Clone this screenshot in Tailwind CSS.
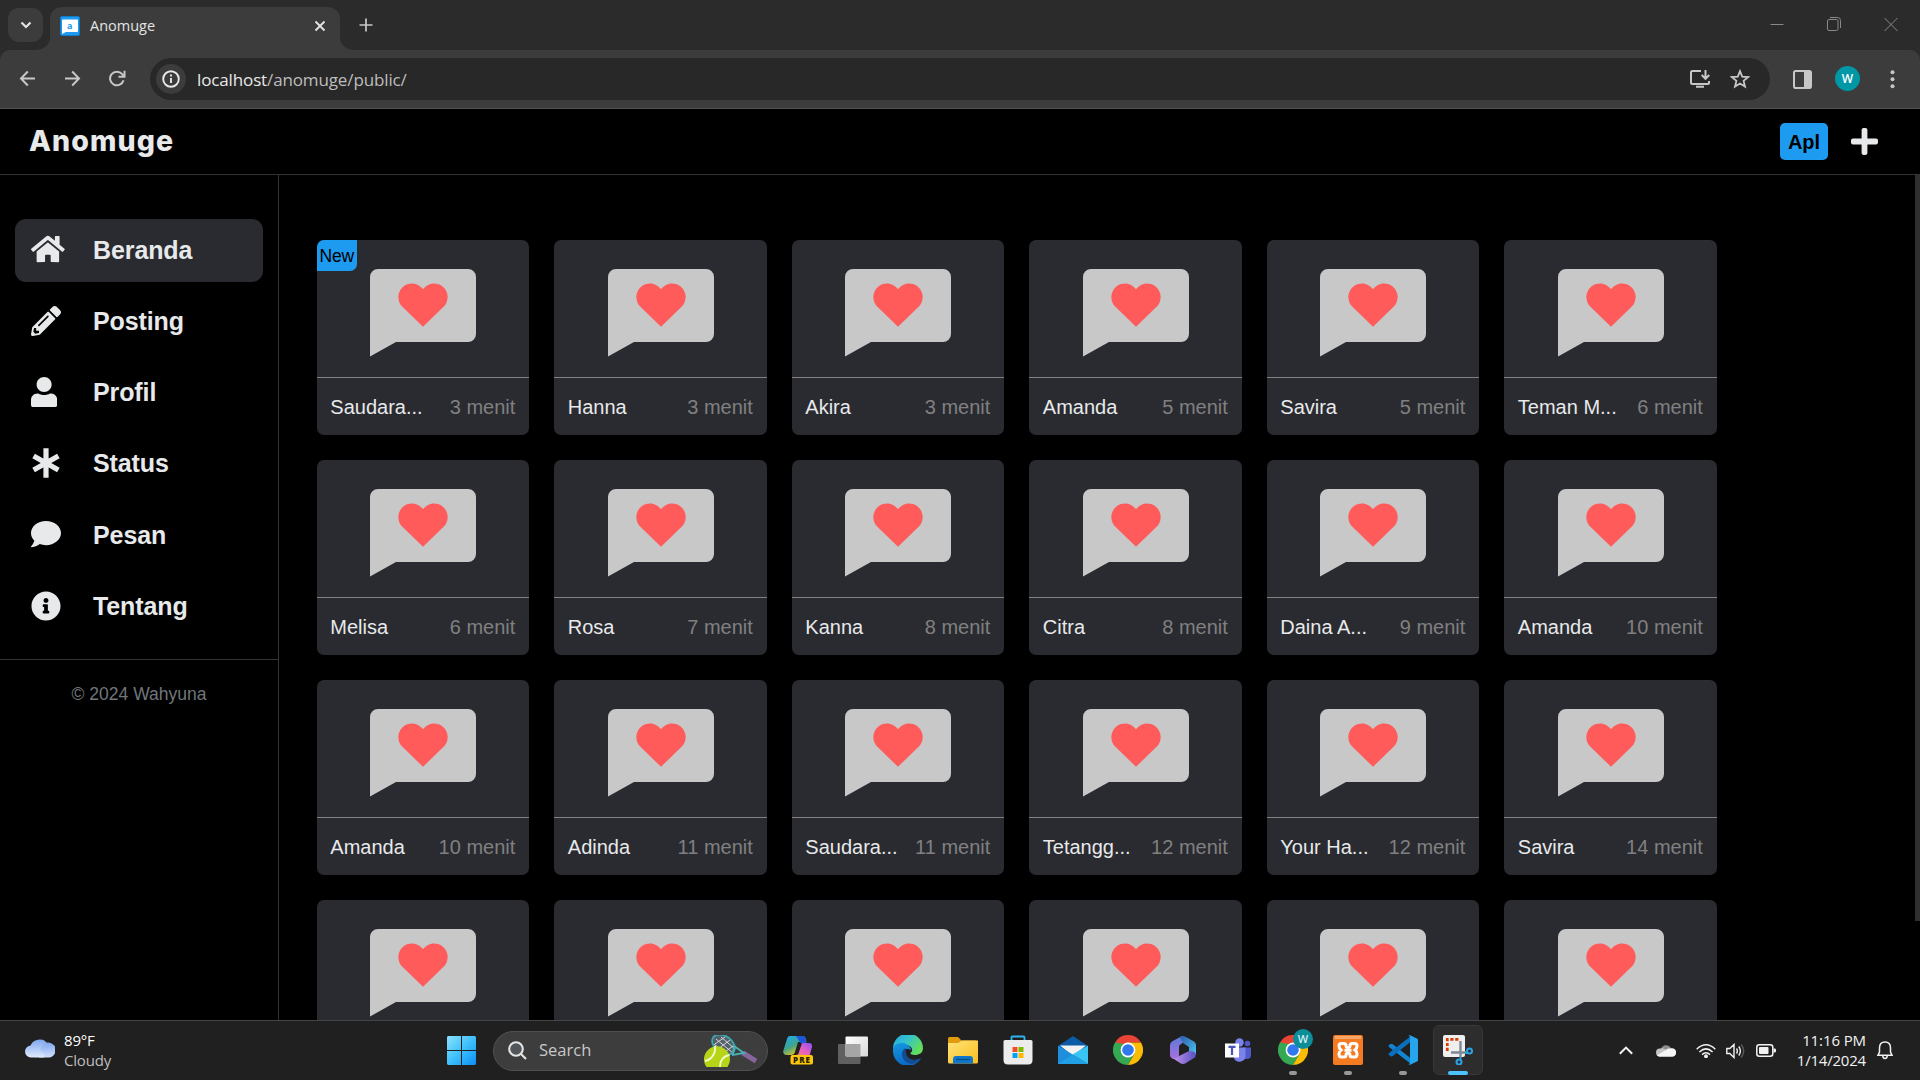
<!DOCTYPE html>
<html lang="id">
<head>
<meta charset="utf-8">
<title>Anomuge</title>
<script src="https://cdn.jsdelivr.net/npm/@tailwindcss/browser@4"></script>
</head>
<body class="h-[1080px] w-[1920px] overflow-hidden bg-black font-['Liberation_Sans',sans-serif]">
<svg class="hidden">
  <symbol id="chrome" viewBox="0 0 30 30">
    <path d="M15 15L2 7.5A15 15 0 0 1 28 7.5H15z" fill="#ea4335"/>
    <path d="M15 15L2 7.5A15 15 0 0 0 15 30l6.5-11.3z" fill="#34a853"/>
    <path d="M15 7.5H28A15 15 0 0 1 15 30l6.5-11.3z" fill="#fbbc04"/>
    <path d="M2 7.5L8.5 18.7 11 9z" fill="#34a853"/>
    <circle cx="15" cy="15" r="7.4" fill="#fff"/><circle cx="15" cy="15" r="5.8" fill="#2f78ee"/>
  </symbol>
  <symbol id="lovechat" viewBox="0 0 106 88">
    <path d="M8 0H98a8 8 0 0 1 8 8V65a8 8 0 0 1-8 8H26L0 87.500V8a8 8 0 0 1 8-8z" fill="#c8c8c8"/>
    <path d="M53 57.800L32.400 37.800A13.600 13.600 0 1 1 53 20.200A13.600 13.600 0 1 1 73.600 37.800z" fill="#ff5b5b"/>
  </symbol>
</svg>
<div class="flex h-full flex-col">

  <!-- Browser tab strip -->
  <div class="flex h-[50px] shrink-0 items-start bg-[#2b2b2b] font-['Open_Sans',sans-serif]">
    <div class="mt-2 ml-2 flex h-[34px] w-[35px] items-center justify-center rounded-[11px] bg-[#3c3c3c]">
      <svg class="h-3 w-3" viewBox="0 0 12 12" fill="none" stroke="#e3e3e3" stroke-width="2.200"><path d="M1.500 3.500L6 8l4.500-4.500"/></svg>
    </div>
    <svg class="mt-[38px] -ml-2 h-3 w-[15px]" viewBox="0 0 15 12"><path d="M0 12A15 12 0 0 0 15 0V12z" fill="#3c3c3c"/></svg>
    <div class="mt-[7px] flex h-[43px] w-[290px] items-center rounded-t-[12px] bg-[#3c3c3c] pr-[14px] pb-[6px] pl-[10px]">
      <svg class="h-5 w-5" viewBox="0 0 20 20"><rect x=".5" y=".5" width="19" height="19" rx="1.500" fill="#1d9bf0" stroke="#1579c4"/><path d="M3 3.500h14a1 1 0 0 1 1 1V15a1 1 0 0 1-1 1H6l-4 2V4.500a1 1 0 0 1 1-1z" fill="#fff"/><text x="7" y="12.800" font-size="9" font-weight="700" fill="#1d9bf0" font-family="Open Sans">a</text></svg>
      <span class="ml-[10px] flex-1 text-[14.500px] text-[#e3e3e3]">Anomuge</span>
      <svg class="h-3 w-3" viewBox="0 0 12 12" stroke="#e3e3e3" stroke-width="1.900"><path d="M1.500 1.500l9 9m0-9l-9 9"/></svg>
    </div>
    <svg class="mt-[38px] h-3 w-[15px]" viewBox="0 0 15 12"><path d="M0 0A15 12 0 0 0 15 12H0z" fill="#3c3c3c"/></svg>
    <svg class="mt-[18px] ml-1 h-[14px] w-[14px]" viewBox="0 0 14 14" stroke="#c7c7c7" stroke-width="1.700"><path d="M7 .5v13M.5 7h13"/></svg>
    <div class="mt-[17px] mr-[22px] ml-auto flex items-center gap-[43px]">
      <svg class="h-[14px] w-[14px]" viewBox="0 0 14 14" stroke="#888"><path d="M0.500 7.500h13"/></svg>
      <svg class="h-[14px] w-[14px]" viewBox="0 0 14 14" fill="none" stroke="#888"><rect x=".5" y="2.500" width="10.500" height="11" rx="1.500"/><path d="M3 .5h7.500a3 3 0 0 1 3 3V11"/></svg>
      <svg class="h-[14px] w-[14px]" viewBox="0 0 14 14" stroke="#888"><path d="M.5 1l13 13m0-13L.5 14"/></svg>
    </div>
  </div>

  <!-- Browser toolbar -->
  <div class="h-[59px] shrink-0 bg-[#2b2b2b]">
    <div class="flex h-full items-start rounded-t-[10px] border-b border-[#505152] bg-[#3c3c3c] pt-2 font-['Open_Sans',sans-serif]">
      <svg class="mt-3 ml-[19px] h-[17px] w-[17px]" viewBox="0 0 17 17" fill="none" stroke="#c7c7c7" stroke-width="2"><path d="M8.800 1.500L2 8.500l6.800 7M2 8.500h14"/></svg>
      <svg class="mt-3 ml-[28px] h-[17px] w-[17px]" viewBox="0 0 17 17" fill="none" stroke="#c7c7c7" stroke-width="2"><path d="M8.200 1.500l6.800 7-6.800 7M15 8.500H1"/></svg>
      <svg class="mt-3 ml-[28px] h-[17px] w-[17px]" viewBox="0 0 17 17" fill="none" stroke="#c7c7c7" stroke-width="2"><path d="M14.500 10.200A6.800 6.800 0 1 1 13.200 4.200L15 6.300M15.500 .8v6h-6"/></svg>
      <div class="ml-[24px] flex h-[42px] w-[1620px] items-center rounded-full bg-[#282828] pr-5 pl-[6px]">
        <div class="flex h-[30px] w-[30px] items-center justify-center rounded-full bg-[#3c3c3c]">
          <svg class="h-[18px] w-[18px]" viewBox="0 0 18 18" fill="none" stroke="#e8e8e8" stroke-width="1.900"><circle cx="9" cy="9" r="7.800"/><path d="M9 8v5M9 4.500v2"/></svg>
        </div>
        <span class="ml-[11px] pt-px text-[17px] tracking-[-0.130px] text-[#bdbdbd]"><span class="text-[#e8e8e8]">localhost</span>/anomuge/public/</span>
        <svg class="ml-auto h-5 w-[22px]" viewBox="0 0 22 20" fill="none" stroke="#c7c7c7" stroke-width="2"><path d="M12 2H3.500Q2 2 2 3.500v10Q2 15 3.500 15h15Q20 15 20 13.500V12M7 17.800h8M16.500 1v8M12.700 6l3.800 3.800L20.300 6"/></svg>
        <svg class="ml-[19px] h-5 w-5" viewBox="0 0 20 20" fill="none" stroke="#c7c7c7" stroke-width="1.800"><path d="M10 2.200l2.200 5.400 5.900.5-4.500 3.800 1.400 5.700-5-3.100-5 3.100 1.400-5.700L1.900 8.100l5.900-.5z"/></svg>
      </div>
      <svg class="mt-3 ml-[23px] h-[19px] w-[19px]" viewBox="0 0 19 19"><rect x="1" y="1" width="17" height="17" rx="1.800" fill="none" stroke="#c7c7c7" stroke-width="2"/><path d="M11 1h7v17h-7z" fill="#c7c7c7"/></svg>
      <div class="mt-2 ml-[23px] flex h-[25px] w-[25px] items-center justify-center rounded-full bg-[#0097a7] text-[12px] font-semibold text-white">W</div>
      <svg class="mt-3 ml-[30px] h-[19px] w-[5px]" viewBox="0 0 5 19" fill="#c7c7c7"><circle cx="2.500" cy="2.200" r="2"/><circle cx="2.500" cy="9.300" r="2"/><circle cx="2.500" cy="16.200" r="2"/></svg>
    </div>
  </div>

  <!-- Site header -->
  <header class="flex h-[66px] shrink-0 items-center justify-between border-b border-[#2f3336] pr-[42px] pl-[29px]">
    <h1 class="pb-px font-[Inter,sans-serif] text-[28.500px] font-extrabold tracking-[1.100px] text-[#e7e9ea]">Anomuge</h1>
    <div class="flex items-center gap-[23px]">
      <span class="flex h-[37px] w-12 items-center justify-center rounded-[5px] bg-[#1d9bf0] text-xl font-bold text-black">Apl</span>
      <svg class="h-[31px] w-[27px]" viewBox="0 0 448 512" fill="#e7e9ea"><path d="M416 208H272V64c0-17.670-14.330-32-32-32h-32c-17.670 0-32 14.330-32 32v144H32c-17.670 0-32 14.330-32 32v32c0 17.670 14.330 32 32 32h144v144c0 17.670 14.330 32 32 32h32c17.670 0 32-14.330 32-32V304h144c17.670 0 32-14.330 32-32v-32c0-17.670-14.330-32-32-32z"/></svg>
    </div>
  </header>

  <!-- Page body -->
  <div class="flex min-h-0 flex-1">
    <aside class="w-[279px] shrink-0 border-r border-[#2f3336]">
      <nav class="flex flex-col gap-[8.750px] border-b border-[#2f3336] px-[15px] pt-11 pb-[21.500px] text-[25px] font-bold tracking-[-0.100px] text-[#e7e9ea]">
        <a class="flex h-[62.500px] items-center rounded-[11px] bg-[#2a2b30] pl-4"><span class="w-[62px] pb-[2px]"><svg class="h-[30px] w-[33.750px]" viewBox="0 0 576 512" fill="currentColor"><path d="M280.370 148.260L96 300.110V464a16 16 0 0 0 16 16l112.060-.29a16 16 0 0 0 15.920-16V368a16 16 0 0 1 16-16h64a16 16 0 0 1 16 16v95.640a16 16 0 0 0 16 16.050L464 480a16 16 0 0 0 16-16V300L295.670 148.260a12.190 12.190 0 0 0-15.300 0zM571.600 251.470L488 182.560V44.050a12 12 0 0 0-12-12h-56a12 12 0 0 0-12 12v72.610L318.470 43a48 48 0 0 0-61 0L4.340 251.470a12 12 0 0 0-1.600 16.900l25.500 31A12 12 0 0 0 45.150 301l235.220-193.740a12.190 12.190 0 0 1 15.300 0L530.900 301a12 12 0 0 0 16.900-1.600l25.500-31a12 12 0 0 0-1.700-16.930z"/></svg></span>Beranda</a>
        <a class="flex h-[62.500px] items-center pl-4"><span class="w-[62px] pb-[2px]"><svg class="h-[30px] w-[30px]" viewBox="0 0 512 512" fill="currentColor"><path d="M497.900 142.100l-46.100 46.100c-4.700 4.700-12.300 4.700-17 0l-111-111c-4.700-4.700-4.700-12.300 0-17l46.100-46.100c18.700-18.700 49.100-18.700 67.900 0l60.100 60.100c18.800 18.700 18.800 49.100 0 67.900zM284.200 99.800L21.600 362.400.4 483.900c-2.900 16.400 11.400 30.600 27.800 27.800l121.500-21.300 262.600-262.600c4.700-4.700 4.700-12.300 0-17l-111-111c-4.800-4.700-12.400-4.700-17.100 0zM124.100 339.900c-5.500-5.500-5.500-14.300 0-19.800l154-154c5.500-5.500 14.300-5.500 19.800 0s5.500 14.300 0 19.800l-154 154c-5.500 5.500-14.300 5.500-19.800 0zM88 424h48v36.300l-64.500 11.300-31.100-31.100L51.700 376H88v48z"/></svg></span>Posting</a>
        <a class="flex h-[62.500px] items-center pl-4"><span class="w-[62px] pb-[2px]"><svg class="h-[30px] w-[26.250px]" viewBox="0 0 448 512" fill="currentColor"><path d="M224 256c70.700 0 128-57.300 128-128S294.700 0 224 0 96 57.300 96 128s57.300 128 128 128zm115 24h-16c-26 16-60 26-99 26s-73-10-99-26h-16C48 280 0 330 0 390V476c0 22 14 36 36 36h376c22 0 36-14 36-36v-86c0-60-48-110-109-110z"/></svg></span>Profil</a>
        <a class="flex h-[62.500px] items-center pl-4"><span class="w-[62px] pb-[2px]"><svg class="h-[30px] w-[30px]" viewBox="0 0 30 30" stroke="currentColor" stroke-width="5.200" fill="none"><path d="M15 .3v29.400M2.600 8l24.800 14M27.400 8L2.600 22"/></svg></span>Status</a>
        <a class="flex h-[62.500px] items-center pl-4"><span class="w-[62px] pb-[2px]"><svg class="h-[30px] w-[30px]" viewBox="0 0 512 512" fill="currentColor"><path d="M256 32C114.600 32 0 125.100 0 240c0 49.600 21.400 95 57 130.700C44.500 421.100 2.700 466 2.200 466.500c-2.200 2.300-2.800 5.700-1.500 8.700S4.800 480 8 480c66.300 0 116-31.800 140.600-51.400 32.700 12.300 69 19.400 107.400 19.400 141.400 0 256-93.100 256-208S397.400 32 256 32z"/></svg></span>Pesan</a>
        <a class="flex h-[62.500px] items-center pl-4"><span class="w-[62px] pb-[2px]"><svg class="h-[30px] w-[30px]" viewBox="0 0 512 512" fill="currentColor"><path d="M256 8C119.043 8 8 119.083 8 256c0 136.997 111.043 248 248 248s248-111.003 248-248C504 119.083 392.957 8 256 8zm0 110c23.196 0 42 18.804 42 42s-18.804 42-42 42-42-18.804-42-42 18.804-42 42-42zm56 254c0 6.627-5.373 12-12 12h-88c-6.627 0-12-5.373-12-12v-24c0-6.627 5.373-12 12-12h12v-64h-12c-6.627 0-12-5.373-12-12v-24c0-6.627 5.373-12 12-12h64c6.627 0 12 5.373 12 12v100h12c6.627 0 12 5.373 12 12v24z"/></svg></span>Tentang</a>
      </nav>
      <p class="pt-[21px] text-center text-[17.500px] text-[#71767b]">© 2024 Wahyuna</p>
    </aside>
    <main class="min-w-0 flex-1 overflow-hidden pt-[65px] pl-[37.800px]">
      <div id="cards" class="grid grid-cols-[repeat(6,212.500px)] gap-[25px]"></div>
    </main>
    <div class="h-[746px] w-[5px] bg-[#2f2f2f]"></div>
  </div>

  <!-- Taskbar -->
  <footer class="flex h-[60px] shrink-0 items-center border-t border-[#444] bg-[#202020] font-['Open_Sans',sans-serif]">
    <div class="flex w-[447px] items-center pl-[25px]">
      <svg class="-mt-[6px] h-5 w-[30px]" viewBox="0 0 30 20"><defs><linearGradient id="cl" x2="0" y2="1"><stop stop-color="#9dbdf5"/><stop offset="1" stop-color="#e0ebfc"/></linearGradient><linearGradient id="cl2" x2="0" y2="1"><stop stop-color="#82a7ee"/><stop offset="1" stop-color="#d0e0fb"/></linearGradient></defs><path d="M5 10a9.500 9.500 0 0 1 18-3v10H8z" fill="url(#cl2)"/><path d="M16 10a7.500 7.500 0 1 1 7 9.500H14z" fill="url(#cl2)"/><path d="M6 7.500c5 0 7 3 8 5 4 0 7 4 5 7H6A6 6 0 0 1 6 7.500z" fill="url(#cl)"/></svg>
      <div class="ml-[9px] pb-[2px] text-[15px] leading-5 tracking-[-0.200px] text-[#bebebe]"><div class="text-white">89°F</div><div>Cloudy</div></div>
    </div>
    <svg class="h-[29px] w-[29px]" viewBox="0 0 29 29"><defs><linearGradient id="wn" x2="1" y2="1"><stop stop-color="#8ae2ff"/><stop offset=".5" stop-color="#3fc0fb"/><stop offset="1" stop-color="#0a8ff5"/></linearGradient></defs><path d="M1 0h13v14H0V1zM15 0h13l1 1v13H15zM0 15h14v14H1l-1-1zM15 15h14v13l-1 1H15z" fill="url(#wn)"/></svg>
    <div class="ml-[17px] flex h-10 w-[275px] items-center rounded-full border border-[#505050] bg-[#3d3d3d] pl-[14px]">
      <svg class="h-[19px] w-[19px]" viewBox="0 0 19 19" fill="none" stroke="#e4e4e4" stroke-width="2.100"><circle cx="8" cy="8" r="6.800" fill="#52565b"/><path d="M12.800 12.800l5.200 5.200"/></svg>
      <span class="ml-3 text-[16.500px] text-[#c8c8c8]">Search</span>
      <svg class="ml-auto mr-[10px] h-8 w-[53px]" viewBox="0 0 53 32">
        <path d="M39 18l13 8" stroke="#86659c" stroke-width="5"/>
        <ellipse cx="19.500" cy="9.500" rx="12" ry="8" transform="rotate(35 19.500 9.500)" fill="#54606a"/>
        <path d="M12 4l17 14M17 2l14 12M10 9l12 10M11 9l10-7M14 14l12-9M21 17l8-6" stroke="#d6d8dc" stroke-width="1"/>
        <ellipse cx="19.500" cy="9.500" rx="12.500" ry="8.500" transform="rotate(35 19.500 9.500)" fill="none" stroke="#39a9ae" stroke-width="1.800"/>
        <path d="M30 11l10 7-11 2z" fill="none" stroke="#49b4b7" stroke-width="1.800"/>
        <path d="M2.500 32A13 13 0 1 1 23.500 32z" fill="#b7d516"/><path d="M1 26c6-1 11-7 10-15M16 32c0-7 4-11 9.500-12" fill="none" stroke="#f2fad0" stroke-width="1.800"/>
      </svg>
    </div>
    <div class="ml-[2px] flex items-center pb-px">
      <div class="flex h-[50px] w-[55px] items-center justify-center">
        <svg class="h-[30px] w-[30px]" viewBox="0 0 30 30"><defs><linearGradient id="cp" x2=".6" y2="1"><stop stop-color="#1aaef5"/><stop offset=".55" stop-color="#3fa48b"/><stop offset="1" stop-color="#f3c714"/></linearGradient><linearGradient id="cq" x1="1" x2="0" y2="1"><stop stop-color="#8b50f5"/><stop offset=".5" stop-color="#e95fc1"/><stop offset="1" stop-color="#fd8a5a"/></linearGradient></defs><path d="M7 1h13c2 0 3 2 3.500 6H15l-3 10c-.5 2-2 3-4 3H4c-3 0-4.500-2-3.500-5L4 4c.5-2 1.500-3 3-3z" fill="url(#cp)"/><path d="M13 1h7c2 0 2.500 2 3.500 7h-6z" fill="#1f55dd"/><path d="M19 8h7c2.500 0 3.500 2 3 4l-2.500 9H9l4-1c2 0 2.500-1 3-3z" fill="url(#cq)"/><rect x="7.500" y="20" width="22.500" height="9.500" rx="2" fill="#fcc60a"/><text x="10" y="27.800" font-size="8" font-weight="800" textLength="17" fill="#2a2200" font-family="Open Sans">PRE</text></svg>
      </div>
      <div class="flex h-[50px] w-[55px] items-center justify-center">
        <svg class="h-[30px] w-[30px]" viewBox="0 0 30 30"><defs><linearGradient id="tv" x2="1" y2="1"><stop stop-color="#fff"/><stop offset="1" stop-color="#d8d8d8"/></linearGradient></defs><rect y="9" width="22.500" height="20" rx="1" fill="#606060"/><rect x="7.500" y="1.500" width="22.500" height="20" rx="1" fill="url(#tv)"/><path d="M7.500 9H22.500v12.500h-14l-1-1z" fill="#a5a5a5"/></svg>
      </div>
      <div class="flex h-[50px] w-[55px] items-center justify-center">
        <svg class="h-[30px] w-[30px]" viewBox="0 0 30 30"><defs><linearGradient id="e1" x2="1" y2=".5"><stop stop-color="#23a5e0"/><stop offset=".5" stop-color="#35c3ce"/><stop offset="1" stop-color="#63de5b"/></linearGradient><linearGradient id="e2" x2=".3" y2="1"><stop stop-color="#1599e0"/><stop offset="1" stop-color="#0a68c6"/></linearGradient></defs><path d="M0 14A15 15 0 0 1 30 13c0 5-4 7-8 7-3 0-5-1-4.500-2 4-3 0-8-4-8C7 9 2 11 0 14z" fill="url(#e1)"/><path d="M0 15C0 9 8 6 14 9.500c3 1.500 4 4 4 6-2-2-5-2-7 0-4 6 2 12 10 10l7-2A15 15 0 0 1 0 15z" fill="url(#e2)"/><path d="M12 13c-7 6-1 16 8 16 3-1 6-3 8-6-5 3-12 2-14-2-1.500-3-1-6-2-8z" fill="#124d92"/></svg>
      </div>
      <div class="flex h-[50px] w-[55px] items-center justify-center">
        <svg class="h-[30px] w-[30px]" viewBox="0 0 30 30"><defs><linearGradient id="fd" x2="1" y2="1"><stop stop-color="#ffe37a"/><stop offset="1" stop-color="#fcbd1c"/></linearGradient></defs><path d="M0 3.500Q0 2 1.500 2H10l3.500 3.500H28V12H0z" fill="#e09c0d"/><path d="M0 8h10l4-2.500h16V27q0 1.500-1.500 1.500h-27Q0 28.500 0 27z" fill="url(#fd)"/><path d="M5 28.500V24q0-3 3-3h14q3 0 3 3v4.500z" fill="#1277c8"/><path d="M8 24.500h14" stroke="#0b4e8c" stroke-width="1.300"/></svg>
      </div>
      <div class="flex h-[50px] w-[55px] items-center justify-center">
        <svg class="h-[30px] w-[30px]" viewBox="0 0 30 30"><path d="M8.500 6V2.500q0-1 1-1h11q1 0 1 1V6" fill="none" stroke="#2bb4f0" stroke-width="1.900"/><path d="M.5 6.500Q.5 5 2 5h26q1.500 0 1.500 1.500V25q0 4.500-4.500 4.500H5Q.5 29.500.5 25z" fill="#ececec"/><path d="M9.500 12h5v5h-5z" fill="#f25022"/><path d="M15.500 12h5v5h-5z" fill="#7fba00"/><path d="M9.500 18h5v5h-5z" fill="#00a4ef"/><path d="M15.500 18h5v5h-5z" fill="#ffb900"/></svg>
      </div>
      <div class="flex h-[50px] w-[55px] items-center justify-center">
        <svg class="h-[30px] w-[30px]" viewBox="0 0 30 30"><path d="M0 11L15 1l15 10v8H0z" fill="#0d5aa7"/><path d="M2 10.500h26L15 21z" fill="#f2f2f2"/><path d="M0 10.500l30 18.500H0z" fill="#1e8fdc"/><path d="M30 10.500V29L14.500 19.500z" fill="#38c5f4"/><path d="M0 29h30L14.500 19.500z" fill="#22a0e6"/></svg>
      </div>
      <div class="flex h-[50px] w-[55px] items-center justify-center"><svg class="h-[30px] w-[30px]"><use href="#chrome"/></svg></div>
      <div class="flex h-[50px] w-[55px] items-center justify-center">
        <svg class="h-[30px] w-[30px]" viewBox="0 0 30 30"><defs><linearGradient id="m1" x2="0" y2="1"><stop stop-color="#5b7bd8"/><stop offset="1" stop-color="#a86fe0"/></linearGradient><linearGradient id="m2" x2="1" y2="1"><stop stop-color="#2a5ba8"/><stop offset="1" stop-color="#4ec5f2"/></linearGradient><linearGradient id="m3" x2="1"><stop stop-color="#c99af0"/><stop offset="1" stop-color="#5a50c0"/></linearGradient></defs><path d="M14 1L4 6.500Q2 8 2 10v10q0 3 4 4 5 0 5-4v-8q0-2 2-3l5-3V3z" fill="url(#m1)"/><path d="M12 2q3-2 6 0l8 4.500Q28 8 28 10v10q-4-1-7-3v-5l-6-4q-2-2-2-4z" fill="url(#m2)"/><path d="M3 22q4 3 8-1l10-5q6 0 7 3 0 3-2 4l-8 5q-3 2-6 0z" fill="url(#m3)"/></svg>
      </div>
      <div class="flex h-[50px] w-[55px] items-center justify-center">
        <svg class="h-[30px] w-[30px]" viewBox="0 0 30 30"><circle cx="16.500" cy="7.500" r="4.200" fill="#7b83eb"/><circle cx="24.500" cy="8.500" r="2.800" fill="#5059c9"/><path d="M20 12.500h8V20q0 4-4 4h-4z" fill="#5059c9"/><path d="M11 12.500h11.500V20a6 6 0 0 1-11.500 3z" fill="#7b83eb"/><rect x="2" y="8.500" width="14" height="14" fill="#fff"/><path d="M5.500 11.800h7M9 12v8" stroke="#4b53bc" stroke-width="2.200"/></svg>
      </div>
      <div class="relative flex h-[50px] w-[55px] items-center justify-center">
        <svg class="h-[30px] w-[30px]"><use href="#chrome"/></svg>
        <span class="absolute top-1 left-[28px] flex h-5 w-5 items-center justify-center rounded-full bg-[#0b8d9a] text-[11px] font-semibold text-[#d5eef0]">W</span>
        <span class="absolute bottom-0 h-1 w-2 rounded-full bg-[#989898]"></span>
      </div>
      <div class="relative flex h-[50px] w-[55px] items-center justify-center">
        <svg class="h-[30px] w-[30px]" viewBox="0 0 30 30"><rect width="30" height="30" rx="2" fill="#f47b22"/><path d="M2 1h26v3H2z" fill="#f9a66a"/><path d="M8.500 8.500H11q2 0 2 2 0 2 2 2t2-2q0-2 2-2h2.500q2.500 0 2.500 2.500 0 2.500-2 4 2 1.500 2 4 0 3-2.500 3H19q-2 0-2-2t-2-2-2 2-2 2H8.500Q6 22 6 19q0-2.500 2-4-2-1.500-2-4 0-2.500 2.500-2.500z" fill="none" stroke="#fff" stroke-width="3"/><path d="M11.500 15.300h7" stroke="#fff" stroke-width="3"/></svg>
        <span class="absolute bottom-0 h-1 w-2 rounded-full bg-[#989898]"></span>
      </div>
      <div class="relative flex h-[50px] w-[55px] items-center justify-center">
        <svg class="h-[30px] w-[30px]" viewBox="0 0 30 30"><path d="M.5 10.500L2.500 9q1-.5 2 0L23 23.500V29L1 12z" fill="#1185cf"/><path d="M.5 19.500l2 1.700q1 .5 2 0L23 6.500V1L1 18z" fill="#0a70bd"/><path d="M22 .3L29 3.500q1 .5 1 1.500v20q0 1-1 1.500l-7 3.300q-1 .2-1.500-.8 1.500 0 1.500-1V2q0-1-1.500-1 .5-1 1.500-.7z" fill="#27a5ec"/></svg>
        <span class="absolute bottom-0 h-1 w-2 rounded-full bg-[#989898]"></span>
      </div>
      <div class="relative ml-[3px] flex h-[50px] w-[50px] items-center justify-center rounded-md border border-[#383838] bg-[#2d2d2d]">
        <svg class="h-[30px] w-[30px]" viewBox="0 0 30 30"><rect width="22" height="22" rx="2" fill="#efefef"/><path d="M4.300 16V4.300H16" fill="none" stroke="#d83b01" stroke-width="2.700" stroke-dasharray="3.200 1.700"/><path d="M17.500 6v16M8 17.500h16" stroke="#7d8a94" stroke-width="2.400"/><circle cx="26.500" cy="16" r="2.500" fill="none" stroke="#2ba3e8" stroke-width="2"/><circle cx="16" cy="27" r="2.500" fill="none" stroke="#2ba3e8" stroke-width="2"/><path d="M22 18l3-1M17 25l1-3" stroke="#2ba3e8" stroke-width="1.800"/></svg>
        <span class="absolute -bottom-px h-1 w-5 rounded-full bg-[#4cc2ff]"></span>
      </div>
    </div>
    <div class="mr-[27px] ml-auto flex items-center">
      <svg class="h-[9px] w-[14px]" viewBox="0 0 14 9" fill="none" stroke="#f2f2f2" stroke-width="2"><path d="M.8 7.800L7 1.600l6.200 6.200"/></svg>
      <svg class="ml-[23px] h-[13px] w-5" viewBox="0 0 20 13"><path d="M5 5a5.500 5.500 0 0 1 10-1l-5 4z" fill="#8e8e8e"/><path d="M4 4.500q4-1 6 1.500l-6 6.500A4 4 0 0 1 4 4.500z" fill="#c4c4c4"/><path d="M9 6.500q3-3 7-2.200a4.200 4.200 0 0 1 0 8.500H4q-2-.3-3-1.500z" fill="#f6f6f6"/></svg>
      <svg class="ml-5 h-[14px] w-5" viewBox="0 0 20 14" fill="none" stroke="#f2f2f2" stroke-width="1.500"><path d="M.7 5.200q9.300-8.800 18.600 0M3.400 8q6.600-6.200 13.200 0M6 10.600q4-3.700 8 0"/><circle cx="10" cy="12.200" r="1.200" fill="#f2f2f2"/></svg>
      <svg class="ml-[10px] h-4 w-5" viewBox="0 0 20 16" fill="none" stroke="#f2f2f2" stroke-width="1.400"><path d="M.8 5.500h3L8 1.500v13l-4.200-4h-3zM10.500 5.500q1.700 2.500 0 5M12.800 3.500q3.200 4.500 0 9"/><path d="M15.200 1.500q5 6.500 0 13" stroke="#5a5a5a"/></svg>
      <svg class="ml-[10px] h-[13px] w-5" viewBox="0 0 20 13"><rect x=".8" y=".8" width="16" height="11.400" rx="2.500" fill="none" stroke="#f2f2f2" stroke-width="1.500"/><rect x="3" y="3" width="9.500" height="7" rx="1" fill="#f2f2f2"/><path d="M17.500 4.500H19q1 0 1 2t-1 2h-1.500z" fill="#f2f2f2"/></svg>
      <div class="ml-[17px] flex w-[73px] flex-col items-end pb-[2px] text-[15px] leading-5 whitespace-nowrap text-[#f2f2f2]"><div class="tracking-[-0.100px]">11:16 PM</div><div class="tracking-[-0.200px]">1/14/2024</div></div>
      <svg class="ml-[11px] h-[19px] w-4" viewBox="0 0 16 19" fill="none" stroke="#f2f2f2" stroke-width="1.500"><path d="M8 1Q2.500 1 2.500 7v4L.9 14.300h14.200L13.500 11V7Q13.500 1 8 1zM5.800 14.800q0 2.700 2.200 2.700t2.200-2.700"/></svg>
    </div>
  </footer>
</div>
<script>
const posts = [
  ['Saudara...', 3], ['Hanna', 3], ['Akira', 3], ['Amanda', 5], ['Savira', 5], ['Teman M...', 6],
  ['Melisa', 6], ['Rosa', 7], ['Kanna', 8], ['Citra', 8], ['Daina A...', 9], ['Amanda', 10],
  ['Amanda', 10], ['Adinda', 11], ['Saudara...', 11], ['Tetangg...', 12], ['Your Ha...', 12], ['Savira', 14],
  null, null, null, null, null, null
];
document.getElementById('cards').innerHTML = posts.map((p, i) => `
  <article class="relative flex h-[195px] flex-col overflow-hidden rounded-[7px] bg-[#2a2b30]">
    ${i === 0 ? '<span class="absolute top-0 left-0 flex h-[31px] w-10 items-center justify-center rounded-br-[7px] bg-[#1d9bf0] pt-[2px] text-[17.500px] tracking-[-0.200px] text-black">New</span>' : ''}
    <div class="flex h-[138px] justify-center border-b border-[#808080] pt-[29px]"><svg class="h-[88px] w-[106px]"><use href="#lovechat"/></svg></div>
    <div class="flex flex-1 items-center justify-between pt-px pr-[14px] pl-[13.500px] text-xl">${p ? `<span class="text-[#e7e9ea]">${p[0]}</span><span class="text-[#808080]">${p[1]} menit</span>` : ''}</div>
  </article>`).join('');
</script>
</body>
</html>
